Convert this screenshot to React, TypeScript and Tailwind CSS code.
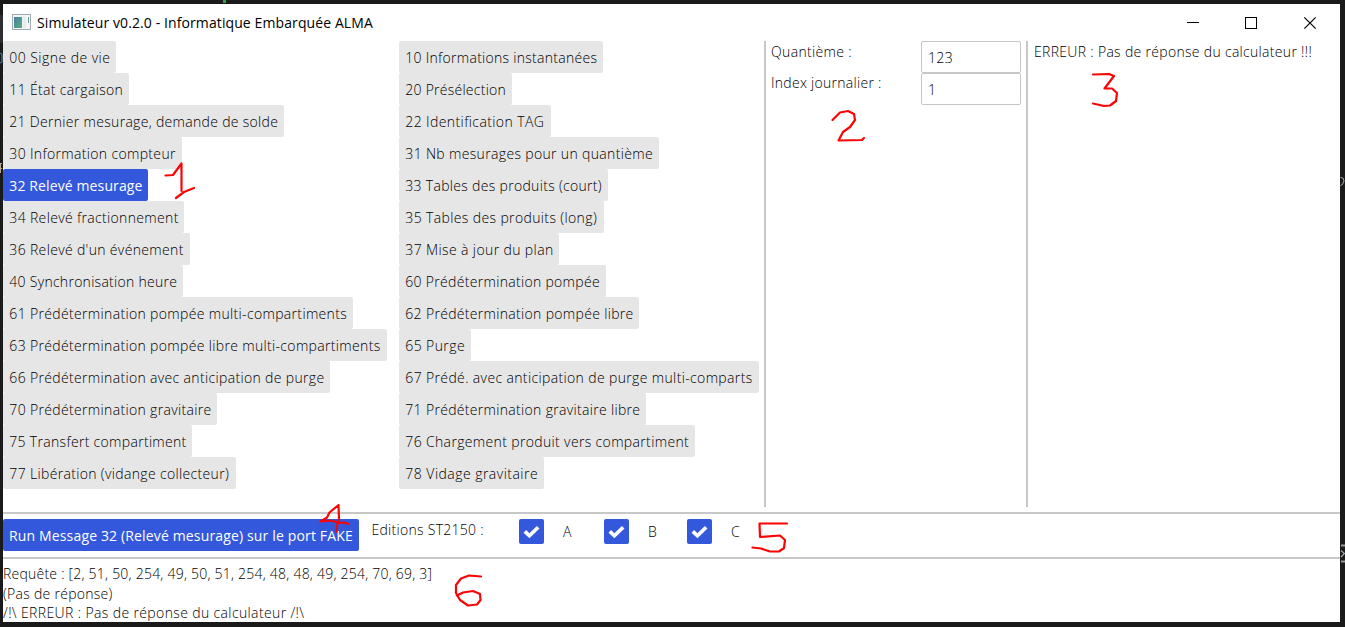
import React from "react";

type Command = { label: string; width: string; tracking?: string; active?: boolean };

const leftCommands: Command[] = [
  { label: "00 Signe de vie", width: "w-[113px]", tracking: "tracking-[0.45px]" },
  { label: "11 État cargaison", width: "w-[126px]" },
  { label: "21 Dernier mesurage, demande de solde", width: "w-[281px]", tracking: "tracking-[0.31px]" },
  { label: "30 Information compteur", width: "w-[178.5px]" },
  { label: "32 Relevé mesurage", width: "w-[145px]", tracking: "tracking-[0.12px]", active: true },
  { label: "34 Relevé fractionnement", width: "w-[181px]" },
  { label: "36 Relevé d'un événement", width: "w-[187px]" },
  { label: "40 Synchronisation heure", width: "w-[180px]", tracking: "tracking-[0.28px]" },
  { label: "61 Prédétermination pompée multi-compartiments", width: "w-[350px]" },
  { label: "63 Prédétermination pompée libre multi-compartiments", width: "w-[384px]" },
  { label: "66 Prédétermination avec anticipation de purge", width: "w-[327px]" },
  { label: "70 Prédétermination gravitaire", width: "w-[214px]" },
  { label: "75 Transfert compartiment", width: "w-[188.5px]", tracking: "tracking-[0.31px]" },
  { label: "77 Libération (vidange collecteur)", width: "w-[233px]" },
];

const rightCommands: Command[] = [
  { label: "10 Informations instantanées", width: "w-[204px]", tracking: "tracking-[0.28px]" },
  { label: "20 Présélection", width: "w-[113px]", tracking: "tracking-[0.25px]" },
  { label: "22 Identification TAG", width: "w-[151.5px]", tracking: "tracking-[0.4px]" },
  { label: "31 Nb mesurages pour un quantième", width: "w-[260px]" },
  { label: "33 Tables des produits (court)", width: "w-[209px]", tracking: "tracking-[0.31px]" },
  { label: "35 Tables des produits (long)", width: "w-[204.5px]", tracking: "tracking-[0.37px]" },
  { label: "37 Mise à jour du plan", width: "w-[160px]", tracking: "tracking-[0.38px]" },
  { label: "60 Prédétermination pompée", width: "w-[207px]", tracking: "tracking-[0.31px]" },
  { label: "62 Prédétermination pompée libre", width: "w-[240px]", tracking: "tracking-[0.32px]" },
  { label: "65 Purge", width: "w-[71.5px]", tracking: "tracking-[0.4px]" },
  { label: "67 Prédé. avec anticipation de purge multi-comparts", width: "w-[360px]", tracking: "tracking-[0.36px]" },
  { label: "71 Prédétermination gravitaire libre", width: "w-[247px]", tracking: "tracking-[0.32px]" },
  { label: "76 Chargement produit vers compartiment", width: "w-[296px]", tracking: "tracking-[0.35px]" },
  { label: "78 Vidage gravitaire", width: "w-[145px]", tracking: "tracking-[0.47px]" },
];

function CommandButton({ label, width, tracking = "tracking-[0.34px]", active }: Command) {
  return (
    <button
      className={`h-8 shrink-0 rounded-[2px] pl-[6.3px] text-left whitespace-nowrap ${width} ${tracking} ${
        active ? "bg-[#3358dc] font-normal text-white" : "bg-[#e6e6e6]"
      }`}
    >
      {label}
    </button>
  );
}

function Field({ label, value, leading }: { label: string; value: string; leading: string }) {
  return (
    <div className="flex h-8 w-[250px] justify-between">
      <span className={leading}>{label}</span>
      <div className="h-8 w-[100px] rounded-[2px] border border-[#c6c6c6] pl-1.5 leading-[31px]">{value}</div>
    </div>
  );
}

function EditionCheckbox({ label, width }: { label: string; width: string }) {
  return (
    <label className={`flex items-center gap-[19px] ${width}`}>
      <span className="flex size-[25px] items-center justify-center rounded-[2px] bg-[#3358dc]">
        <svg viewBox="0 0 25 25" className="size-[25px]" fill="none" stroke="white" strokeWidth="3.7">
          <path d="M5.8 12.4 L10.4 16.8 L19.2 8.2" />
        </svg>
      </span>
      <span>{label}</span>
    </label>
  );
}

function TitleBar() {
  return (
    <div className="flex h-[37px] shrink-0 items-center pl-[9px]">
      <svg width="19" height="16" viewBox="0 0 19 16" className="mb-px">
        <defs>
          <linearGradient id="pane" x1="0" y1="0" x2="1" y2="1">
            <stop offset="0" stopColor="#4a7fa8" />
            <stop offset="1" stopColor="#5dac7c" />
          </linearGradient>
        </defs>
        <rect x="0.5" y="0.5" width="18" height="15" fill="#f4f5f6" stroke="#a3a9b3" />
        <rect x="2" y="3" width="8" height="11" fill="url(#pane)" />
        <rect x="11" y="3" width="3" height="11" fill="#e9ebee" />
        <path d="M16.5 3 V9" stroke="#62a98b" />
      </svg>
      <span className="ml-1.5 grow font-normal tracking-[0.1px]">Simulateur v0.2.0 - Informatique Embarquée ALMA</span>
      <svg width="130" height="14" viewBox="0 0 130 14" fill="none" stroke="black" className="mr-[23px]" shapeRendering="crispEdges">
        <path d="M0 6.5 H12" />
        <rect x="58.5" y="1.5" width="11" height="11" />
        <path d="M117.3 1.3 L128.7 12.7 M128.7 1.3 L117.3 12.7" shapeRendering="auto" strokeWidth="1.2" />
      </svg>
    </div>
  );
}

const strokes = [
  "M165.5 175.5 L173 175 L181.5 163.5 V191 M176 198 L184 192 L194 188",
  "M832.5 120 L840 112.5 L848 111 L854 114 L855 120 L850 127 L843 132 L838.5 140.5 L862 140 L864 138",
  "M1093 74.5 L1109 74 L1114 76 L1104.5 88.5 L1112 88.5 L1117 93 L1116 101 L1110 105.5 L1104 106 L1093 103.5",
  "M336.5 532 L337 526 L339 519 L338.5 505 L329.5 512.5 L327 517.5 L320.5 521.5 L331 520.5 L339 523 L345 522.5 L348 524",
  "M787 523.5 H759.5 L760 537 L780 535.5 L785 540 L784 548 L779 551.5 L770 551.5 L761 548.5 L752.5 547.5",
  "M481 576.5 L469 575.5 L461 578.5 L456 585 L456 593 L460 600 L468 605.5 L477 604.5 L480.5 600 L480 594 L473 591 L463 592.5 L457 595.5",
];

export default function App() {
  return (
    <div className="relative h-[627px] w-[1345px] overflow-hidden bg-[#1a1a1a] pt-1 pl-[3px] font-['Open_Sans',sans-serif] text-[14px] font-light tracking-[0.34px] text-black">
      <div className="flex h-[618px] w-[1337px] flex-col bg-white">
        <TitleBar />
        <div className="flex h-[466px] shrink-0">
          <div className="flex w-[396px] flex-col items-start">
            {leftCommands.map((c) => (
              <CommandButton key={c.label} {...c} />
            ))}
          </div>
          <div className="flex w-[365px] flex-col items-start">
            {rightCommands.map((c) => (
              <CommandButton key={c.label} {...c} />
            ))}
          </div>
          <div className="w-[262px] border-l-2 border-[#c8c8c8] pl-[5px]">
            <Field label="Quantième :" value="123" leading="leading-[22px]" />
            <Field label="Index journalier :" value="1" leading="leading-[20px] tracking-[0.28px]" />
          </div>
          <div className="grow border-l-2 border-[#c8c8c8] pl-[6px] leading-[22px] tracking-[0.31px]">
            ERREUR : Pas de réponse du calculateur !!!
          </div>
        </div>
        <div className="mt-[5px] flex h-[47px] shrink-0 border-y-2 border-[#c8c8c8] pt-[5px]">
          <button className="h-8 w-[356px] rounded-[2px] bg-[#3358dc] pl-1.5 text-left font-normal tracking-[0.15px] whitespace-nowrap text-white">
            Run Message 32 (Relevé mesurage) sur le port FAKE
          </button>
          <span className="ml-[12.5px] w-[147.5px] leading-[22px] tracking-[0.28px]">Editions ST2150 :</span>
          <div className="flex h-[25px]">
            <EditionCheckbox label="A" width="w-[85px]" />
            <EditionCheckbox label="B" width="w-[83px]" />
            <EditionCheckbox label="C" width="w-[60px]" />
          </div>
        </div>
        <div className="pt-[5px] leading-[19.5px]">
          <p className="tracking-[0.23px]">Requête : [2, 51, 50, 254, 49, 50, 51, 254, 48, 48, 49, 254, 70, 69, 3]</p>
          <p className="tracking-[0.28px]">(Pas de réponse)</p>
          <p className="tracking-[0.37px]">/!\ ERREUR : Pas de réponse du calculateur /!\</p>
        </div>
      </div>
      <svg viewBox="0 0 1345 627" className="pointer-events-none absolute inset-0 h-[627px] w-[1345px]" fill="none">
        <path d="M223 0 H226 V3 H223 Z" fill="#2f9e44" />
        <path d="M0 15 H3 V43 H0 Z" fill="#2d2d33" />
        <path d="M0 53 L2 54 V62 L0 63" stroke="#5b87ad" />
        <path d="M0 163.5 H2 M0 168.5 H2 M0.5 163 V173" stroke="#b5a58c" />
        <path d="M1340.5 177.5 L1343 178 L1344 181 L1342.5 184.5 L1340.5 185.5" stroke="#9aa8b5" />
        <path d="M1341 545.5 H1345 M1341 561.5 H1345" stroke="#999999" strokeWidth="2" />
        <path d="M1341 550.5 L1344.5 553.5 L1341 557" stroke="#9fb0bd" strokeWidth="1.2" />
        <g stroke="#fa0505" strokeWidth="2.2" strokeLinecap="round" strokeLinejoin="round">
          {strokes.map((d) => (
            <path key={d} d={d} />
          ))}
        </g>
      </svg>
    </div>
  );
}
